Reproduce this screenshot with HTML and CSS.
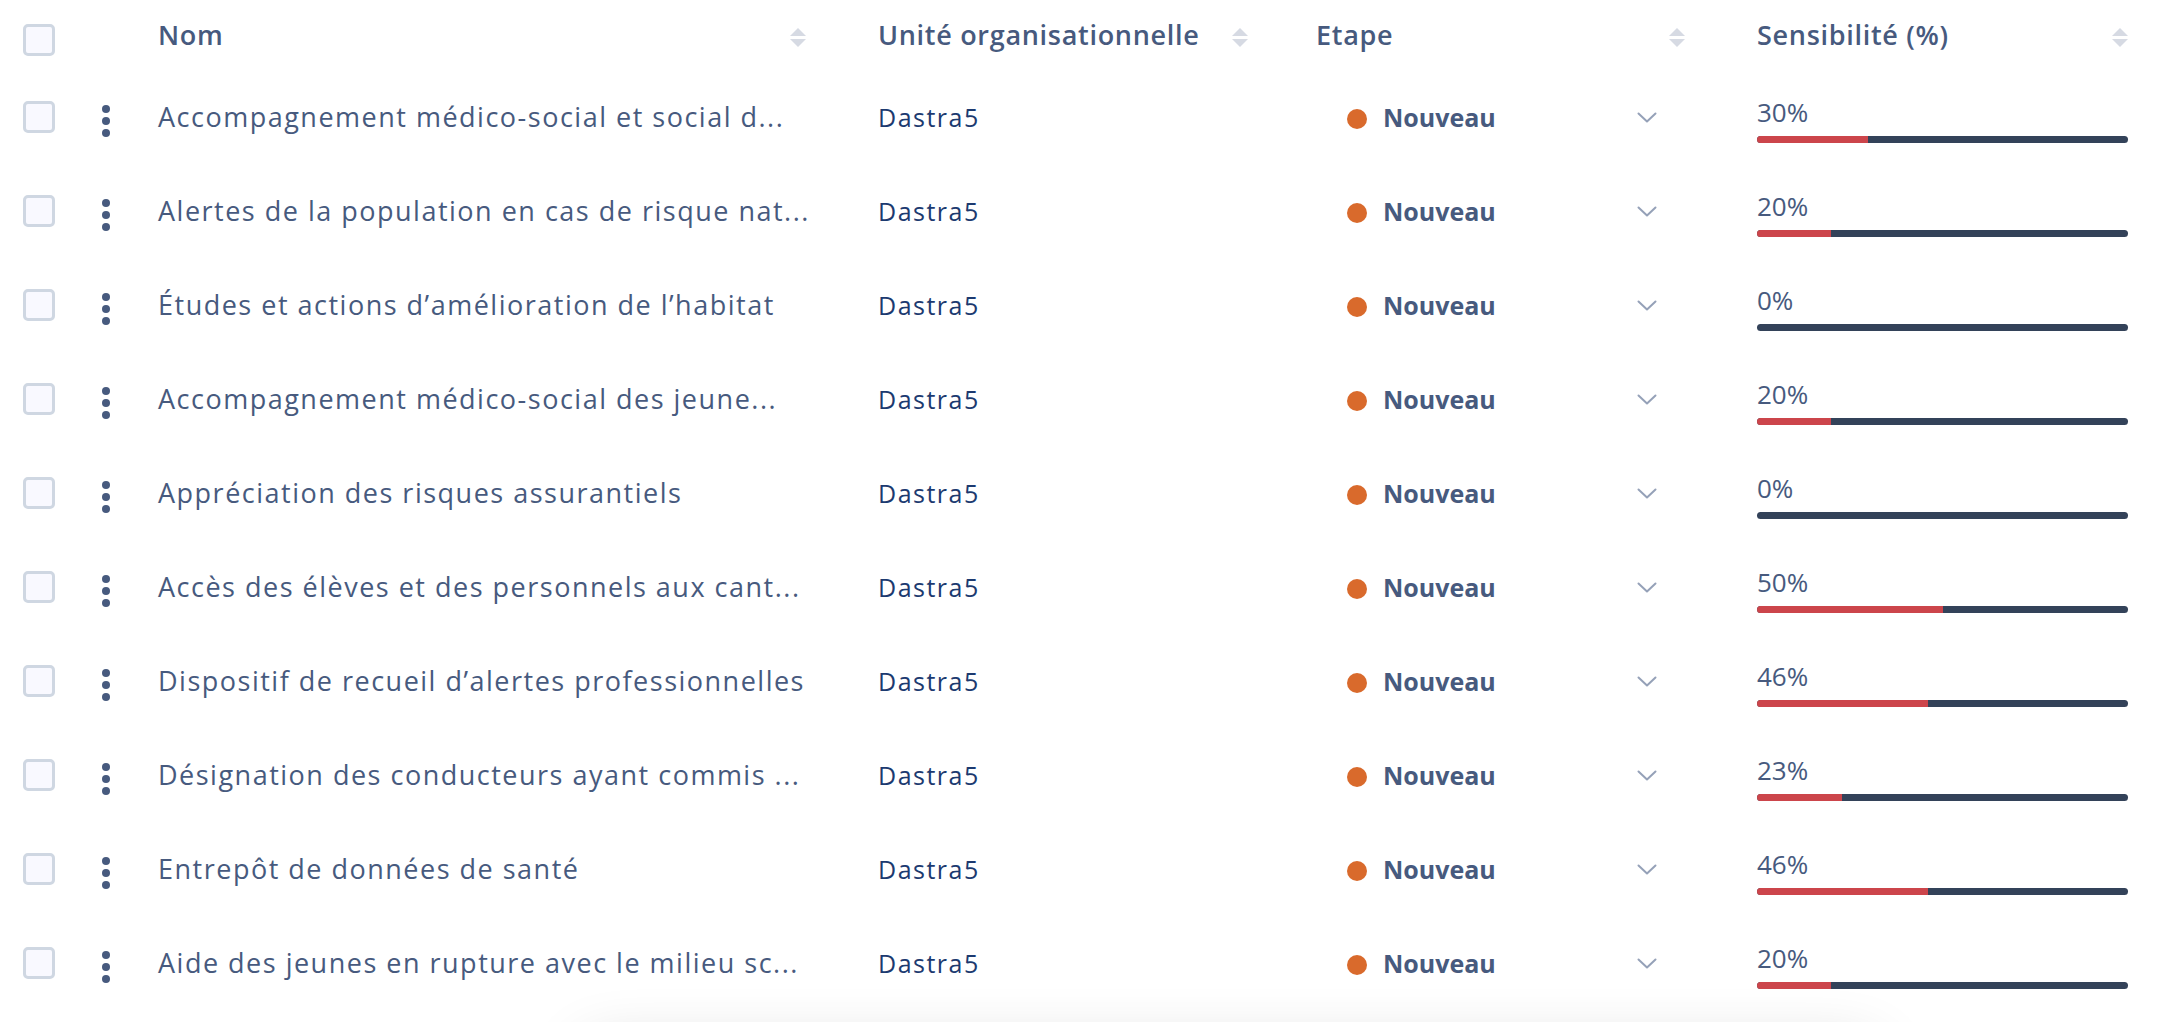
FILE: index.html
```html
<!DOCTYPE html>
<html lang="fr">
<head>
<meta charset="utf-8">
<title>Traitements</title>
<link rel="stylesheet" href="styles.css">
</head>
<body>
<div class="page">
  <div class="table">
    <div class="row head">
      <div class="c-check"><span class="box"></span></div>
      <div class="c-menu"></div>
      <div class="cell c-name"><span class="h">Nom</span><span class="sort"><i class="up"></i><i class="down"></i></span></div>
      <div class="cell c-unit"><span class="h">Unité organisationnelle</span><span class="sort"><i class="up"></i><i class="down"></i></span></div>
      <div class="cell c-step"><span class="h">Etape</span><span class="sort"><i class="up"></i><i class="down"></i></span></div>
      <div class="cell c-sens"><span class="h">Sensibilité (%)</span><span class="sort"><i class="up"></i><i class="down"></i></span></div>
    </div>

    <div class="row">
      <div class="c-check"><span class="box"></span></div>
      <div class="c-menu"><span class="kebab"><i></i><i></i><i></i></span></div>
      <div class="cell c-name"><span class="name">Accompagnement médico-social et social d...</span></div>
      <div class="cell c-unit"><span class="unit">Dastra5</span></div>
      <div class="cell c-step"><div class="select"><span class="dot"></span><span class="step">Nouveau</span><svg class="chev" viewBox="0 0 20 11"><path d="M1.5 1.5 L10 9.5 L18.5 1.5"/></svg></div></div>
      <div class="cell c-sens"><div class="sens"><span class="pct">30%</span><div class="bar"><div class="fill" style="width:30%"></div></div></div></div>
    </div>

    <div class="row">
      <div class="c-check"><span class="box"></span></div>
      <div class="c-menu"><span class="kebab"><i></i><i></i><i></i></span></div>
      <div class="cell c-name"><span class="name">Alertes de la population en cas de risque nat...</span></div>
      <div class="cell c-unit"><span class="unit">Dastra5</span></div>
      <div class="cell c-step"><div class="select"><span class="dot"></span><span class="step">Nouveau</span><svg class="chev" viewBox="0 0 20 11"><path d="M1.5 1.5 L10 9.5 L18.5 1.5"/></svg></div></div>
      <div class="cell c-sens"><div class="sens"><span class="pct">20%</span><div class="bar"><div class="fill" style="width:20%"></div></div></div></div>
    </div>

    <div class="row">
      <div class="c-check"><span class="box"></span></div>
      <div class="c-menu"><span class="kebab"><i></i><i></i><i></i></span></div>
      <div class="cell c-name"><span class="name">Études et actions d’amélioration de l’habitat</span></div>
      <div class="cell c-unit"><span class="unit">Dastra5</span></div>
      <div class="cell c-step"><div class="select"><span class="dot"></span><span class="step">Nouveau</span><svg class="chev" viewBox="0 0 20 11"><path d="M1.5 1.5 L10 9.5 L18.5 1.5"/></svg></div></div>
      <div class="cell c-sens"><div class="sens"><span class="pct">0%</span><div class="bar"><div class="fill" style="width:0%"></div></div></div></div>
    </div>

    <div class="row">
      <div class="c-check"><span class="box"></span></div>
      <div class="c-menu"><span class="kebab"><i></i><i></i><i></i></span></div>
      <div class="cell c-name"><span class="name">Accompagnement médico-social des jeune...</span></div>
      <div class="cell c-unit"><span class="unit">Dastra5</span></div>
      <div class="cell c-step"><div class="select"><span class="dot"></span><span class="step">Nouveau</span><svg class="chev" viewBox="0 0 20 11"><path d="M1.5 1.5 L10 9.5 L18.5 1.5"/></svg></div></div>
      <div class="cell c-sens"><div class="sens"><span class="pct">20%</span><div class="bar"><div class="fill" style="width:20%"></div></div></div></div>
    </div>

    <div class="row">
      <div class="c-check"><span class="box"></span></div>
      <div class="c-menu"><span class="kebab"><i></i><i></i><i></i></span></div>
      <div class="cell c-name"><span class="name">Appréciation des risques assurantiels</span></div>
      <div class="cell c-unit"><span class="unit">Dastra5</span></div>
      <div class="cell c-step"><div class="select"><span class="dot"></span><span class="step">Nouveau</span><svg class="chev" viewBox="0 0 20 11"><path d="M1.5 1.5 L10 9.5 L18.5 1.5"/></svg></div></div>
      <div class="cell c-sens"><div class="sens"><span class="pct">0%</span><div class="bar"><div class="fill" style="width:0%"></div></div></div></div>
    </div>

    <div class="row">
      <div class="c-check"><span class="box"></span></div>
      <div class="c-menu"><span class="kebab"><i></i><i></i><i></i></span></div>
      <div class="cell c-name"><span class="name">Accès des élèves et des personnels aux cant...</span></div>
      <div class="cell c-unit"><span class="unit">Dastra5</span></div>
      <div class="cell c-step"><div class="select"><span class="dot"></span><span class="step">Nouveau</span><svg class="chev" viewBox="0 0 20 11"><path d="M1.5 1.5 L10 9.5 L18.5 1.5"/></svg></div></div>
      <div class="cell c-sens"><div class="sens"><span class="pct">50%</span><div class="bar"><div class="fill" style="width:50%"></div></div></div></div>
    </div>

    <div class="row">
      <div class="c-check"><span class="box"></span></div>
      <div class="c-menu"><span class="kebab"><i></i><i></i><i></i></span></div>
      <div class="cell c-name"><span class="name">Dispositif de recueil d’alertes professionnelles</span></div>
      <div class="cell c-unit"><span class="unit">Dastra5</span></div>
      <div class="cell c-step"><div class="select"><span class="dot"></span><span class="step">Nouveau</span><svg class="chev" viewBox="0 0 20 11"><path d="M1.5 1.5 L10 9.5 L18.5 1.5"/></svg></div></div>
      <div class="cell c-sens"><div class="sens"><span class="pct">46%</span><div class="bar"><div class="fill" style="width:46%"></div></div></div></div>
    </div>

    <div class="row">
      <div class="c-check"><span class="box"></span></div>
      <div class="c-menu"><span class="kebab"><i></i><i></i><i></i></span></div>
      <div class="cell c-name"><span class="name">Désignation des conducteurs ayant commis ...</span></div>
      <div class="cell c-unit"><span class="unit">Dastra5</span></div>
      <div class="cell c-step"><div class="select"><span class="dot"></span><span class="step">Nouveau</span><svg class="chev" viewBox="0 0 20 11"><path d="M1.5 1.5 L10 9.5 L18.5 1.5"/></svg></div></div>
      <div class="cell c-sens"><div class="sens"><span class="pct">23%</span><div class="bar"><div class="fill" style="width:23%"></div></div></div></div>
    </div>

    <div class="row">
      <div class="c-check"><span class="box"></span></div>
      <div class="c-menu"><span class="kebab"><i></i><i></i><i></i></span></div>
      <div class="cell c-name"><span class="name">Entrepôt de données de santé</span></div>
      <div class="cell c-unit"><span class="unit">Dastra5</span></div>
      <div class="cell c-step"><div class="select"><span class="dot"></span><span class="step">Nouveau</span><svg class="chev" viewBox="0 0 20 11"><path d="M1.5 1.5 L10 9.5 L18.5 1.5"/></svg></div></div>
      <div class="cell c-sens"><div class="sens"><span class="pct">46%</span><div class="bar"><div class="fill" style="width:46%"></div></div></div></div>
    </div>

    <div class="row">
      <div class="c-check"><span class="box"></span></div>
      <div class="c-menu"><span class="kebab"><i></i><i></i><i></i></span></div>
      <div class="cell c-name"><span class="name">Aide des jeunes en rupture avec le milieu sc...</span></div>
      <div class="cell c-unit"><span class="unit">Dastra5</span></div>
      <div class="cell c-step"><div class="select"><span class="dot"></span><span class="step">Nouveau</span><svg class="chev" viewBox="0 0 20 11"><path d="M1.5 1.5 L10 9.5 L18.5 1.5"/></svg></div></div>
      <div class="cell c-sens"><div class="sens"><span class="pct">20%</span><div class="bar"><div class="fill" style="width:20%"></div></div></div></div>
    </div>
  </div>
  <div class="floating-shadow"></div>
</div>
</body>
</html>
```

FILE: styles.css
```css
html, body {
  margin: 0;
  padding: 0;
  background: #ffffff;
}

.page {
  position: relative;
  width: 2168px;
  height: 1022px;
  overflow: hidden;
  font-family: "Open Sans", "DejaVu Sans", sans-serif;
  color: #475a7e;
}

.table {
  display: flex;
  flex-direction: column;
}

.row {
  display: grid;
  grid-template-columns: 80px 52px 720px 438px 441px 437px;
  height: 94px;
  align-items: center;
}

.row.head {
  height: 61px;
  padding-top: 9px;
}

.c-check {
  padding-left: 23px;
  display: flex;
  align-items: center;
}

.box {
  display: block;
  width: 26px;
  height: 26px;
  border: 3px solid #cfd7e2;
  border-radius: 5px;
  background: #f9f9ff;
}

.c-menu {
  display: flex;
  justify-content: center;
}

.kebab {
  display: flex;
  flex-direction: column;
  gap: 4px;
  margin-top: 8px;
}

.kebab i {
  display: block;
  width: 8px;
  height: 8px;
  border-radius: 50%;
  background: #475a7e;
}

.cell {
  padding: 0 46px 0 26px;
  display: flex;
  align-items: center;
  min-width: 0;
}

.h {
  font-size: 27px;
  line-height: 36px;
  font-weight: 600;
  color: #475a7e;
  white-space: nowrap;
  letter-spacing: 0.7px;
  margin-bottom: 9px;
}

.c-name .h, .c-step .h, .c-sens .h {
  flex: 1;
}

.c-unit .h {
  margin-right: 32px;
}

.sort {
  display: flex;
  flex-direction: column;
  gap: 3px;
  width: 16px;
  align-items: center;
  margin-bottom: 5px;
}

.sort i {
  display: block;
  width: 0;
  height: 0;
  border-left: 8px solid transparent;
  border-right: 8px solid transparent;
}

.sort .up {
  border-bottom: 8px solid #d6dae3;
}

.sort .down {
  border-top: 8px solid #d6dae3;
}

.name {
  font-size: 27px;
  line-height: 36px;
  white-space: nowrap;
  color: #475a7e;
  letter-spacing: 1.5px;
}

.unit {
  font-size: 25px;
  line-height: 34px;
  font-weight: 500;
  color: #1c3a70;
  letter-spacing: 1.5px;
}

.select {
  flex: 1;
  display: flex;
  align-items: center;
  padding: 0 28px 0 31px;
}

.dot {
  width: 20px;
  height: 20px;
  border-radius: 50%;
  background: #d96a2c;
  margin-right: 16px;
  margin-top: 3px;
}

.step {
  font-size: 25px;
  line-height: 34px;
  font-weight: 700;
  color: #475a7e;
}

.chev {
  margin-left: auto;
  width: 20px;
  height: 11px;
  fill: none;
  stroke: #95a1b8;
  stroke-width: 2;
  stroke-linecap: round;
  stroke-linejoin: round;
}

.c-sens {
  padding-right: 40px;
}

.sens {
  flex: 1;
  display: flex;
  flex-direction: column;
  gap: 9px;
  margin-top: 6px;
}

.pct {
  font-size: 26px;
  line-height: 30px;
  color: #475a7e;
}

.bar {
  height: 7px;
  border-radius: 4px;
  background: #334259;
  overflow: hidden;
}

.fill {
  height: 100%;
  background: #cc454b;
}

.floating-shadow {
  position: absolute;
  left: 580px;
  top: 1045px;
  width: 1300px;
  height: 200px;
  border-radius: 24px;
  background: #fff;
  box-shadow: 0 0 60px rgba(0, 0, 0, 0.16);
}
```
